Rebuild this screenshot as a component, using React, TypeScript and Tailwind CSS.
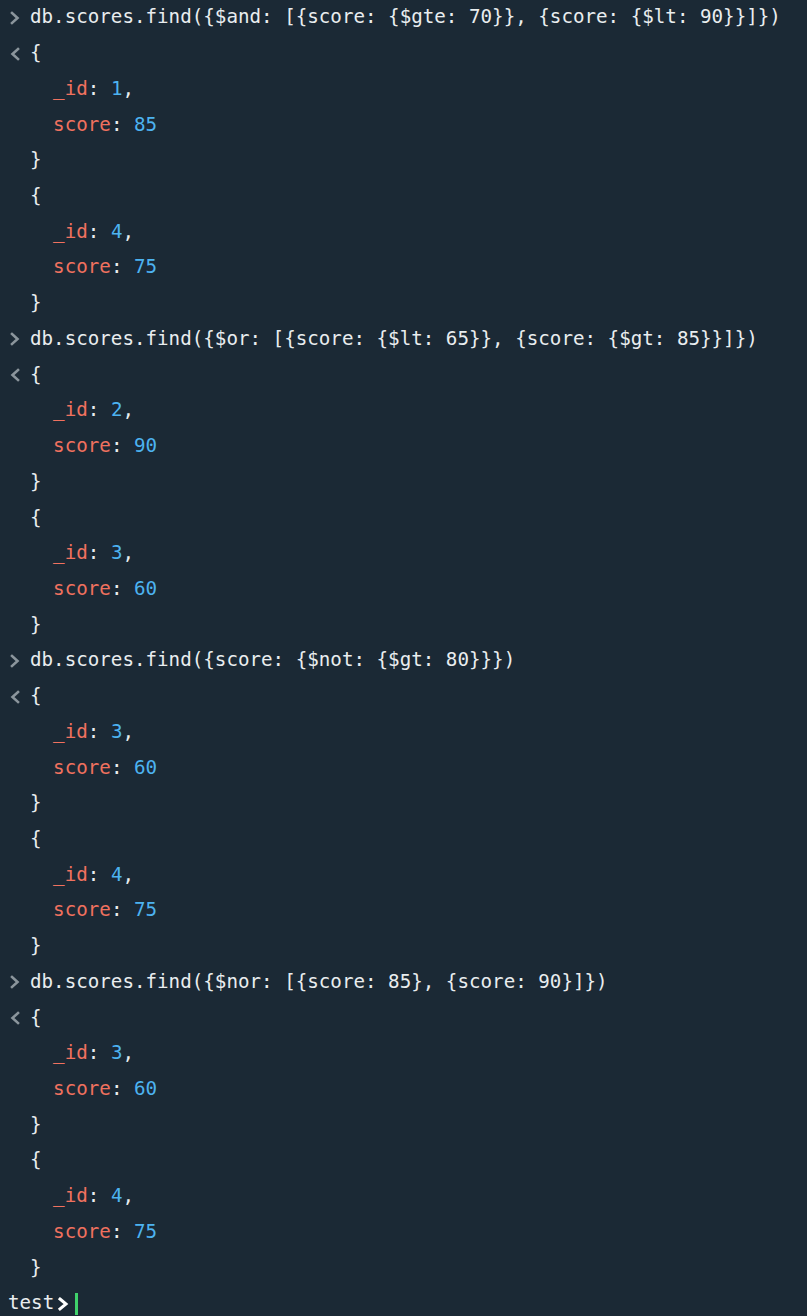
import React from "react"

type Seg = { t: string; c?: "w" | "k" | "n" }
type Line =
  | { kind: "in"; text: string }
  | { kind: "out"; segs: Seg[] }
  | { kind: "plain"; segs: Seg[] }

const doc = (id: number, score: number): Line[] => [
  { kind: "plain", segs: [{ t: "{" }] },
  { kind: "plain", segs: [{ t: "  " }, { t: "_id", c: "k" }, { t: ": " }, { t: String(id), c: "n" }, { t: "," }] },
  { kind: "plain", segs: [{ t: "  " }, { t: "score", c: "k" }, { t: ": " }, { t: String(score), c: "n" }] },
  { kind: "plain", segs: [{ t: "}" }] },
]

const result = (a: [number, number], b: [number, number]): Line[] => {
  const first = doc(a[0], a[1])
  first[0] = { kind: "out", segs: [{ t: "{" }] }
  return [...first, ...doc(b[0], b[1])]
}

const lines: Line[] = [
  { kind: "in", text: "db.scores.find({$and: [{score: {$gte: 70}}, {score: {$lt: 90}}]})" },
  ...result([1, 85], [4, 75]),
  { kind: "in", text: "db.scores.find({$or: [{score: {$lt: 65}}, {score: {$gt: 85}}]})" },
  ...result([2, 90], [3, 60]),
  { kind: "in", text: "db.scores.find({score: {$not: {$gt: 80}}})" },
  ...result([3, 60], [4, 75]),
  { kind: "in", text: "db.scores.find({$nor: [{score: 85}, {score: 90}]})" },
  ...result([3, 60], [4, 75]),
]

const color = (c?: string) =>
  c === "k" ? "text-[#f0715f]" : c === "n" ? "text-[#4db3f0]" : "text-[#e9edef]"

function Chevron({ dir }: { dir: "in" | "out" }) {
  return (
    <svg width="12" height="16" viewBox="0 0 12 16" className="ml-[9px]">
      <path
        d={dir === "in" ? "M3 3 L8.5 8 L3 13" : "M9 3 L3.5 8 L9 13"}
        fill="none"
        stroke="#8b959c"
        strokeWidth="2.6"
        strokeLinecap="square"
      />
    </svg>
  )
}

export default function App() {
  return (
    <div
      className="w-[807px] h-[1316px] bg-[#1b2935] overflow-hidden text-[19.2px] whitespace-pre"
      style={{ fontFamily: '"DejaVu Sans Mono", "Liberation Mono", monospace' }}
    >
      <div>
        {lines.map((line, i) => (
          <div key={i} className="flex items-center h-[35.72px]">
            <div className="w-[30px] shrink-0 flex items-center">
              {line.kind === "in" && <Chevron dir="in" />}
              {line.kind === "out" && <Chevron dir="out" />}
            </div>
            {line.kind === "in" ? (
              <span className="text-[#e9edef]">{line.text}</span>
            ) : (
              <span>
                {line.segs.map((s, j) => (
                  <span key={j} className={color(s.c)}>
                    {s.t}
                  </span>
                ))}
              </span>
            )}
          </div>
        ))}
        <div className="flex items-center h-[35.72px] pl-[8px]">
          <span className="text-[#e9edef]">test</span>
          <svg width="14" height="16" viewBox="0 0 14 16" className="ml-[3px]">
            <path d="M3 3 L9 8 L3 13" fill="none" stroke="#ffffff" strokeWidth="3" strokeLinecap="square" />
          </svg>
          <div className="ml-[4px] w-[3px] h-[22px] bg-[#3fd16b]" />
        </div>
      </div>
    </div>
  )
}
